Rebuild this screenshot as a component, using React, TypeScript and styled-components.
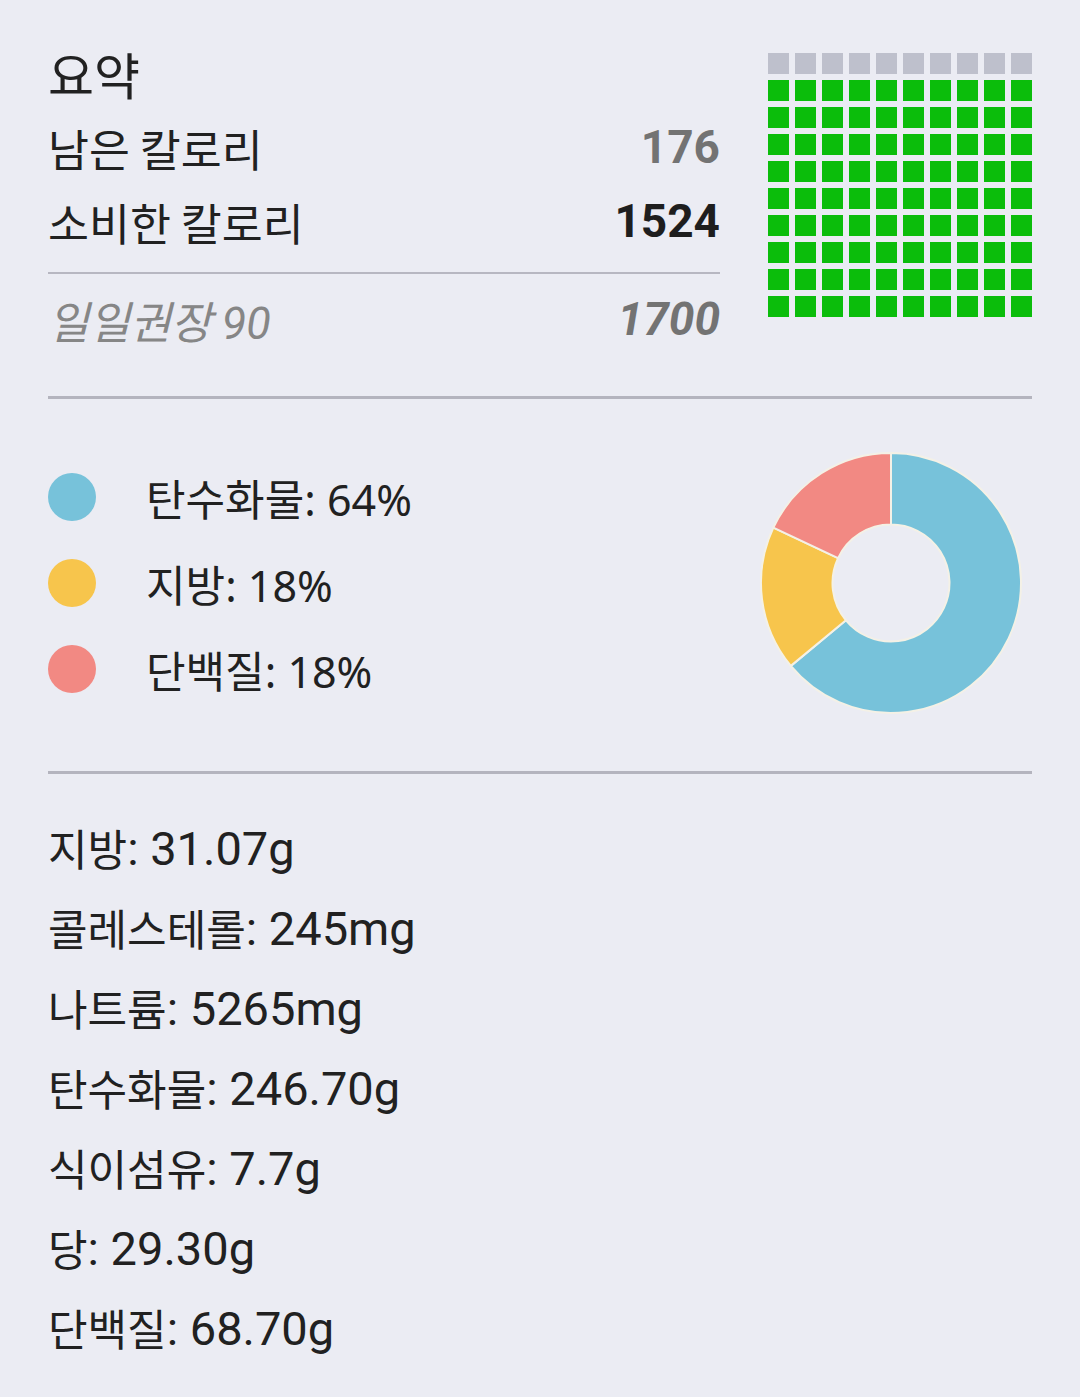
import React from "react";
import styled, { createGlobalStyle } from "styled-components";

const GlobalStyle = createGlobalStyle`
  html, body {
    margin: 0;
    padding: 0;
    background: #ebecf3;
  }
  body {
    font-family: Roboto, "Noto Sans CJK KR", sans-serif;
    color: #212121;
  }
`;

const Page = styled.div`
  padding: 0 48px;
  background: #ebecf3;
  min-height: 1397px;
  box-sizing: border-box;
`;

const TopSection = styled.section`
  display: flex;
  align-items: flex-start;
  justify-content: space-between;
  padding-top: 36px;
  padding-bottom: 40px;
`;

const SummaryCol = styled.div`
  width: 672px;
  display: flex;
  flex-direction: column;
`;

const Row = styled.div<{ $gap?: number }>`
  height: 74px;
  display: flex;
  align-items: center;
  justify-content: space-between;
  margin-top: ${(p) => p.$gap ?? 0}px;
`;

const Title = styled.h1`
  margin: 0;
  font-family: "Noto Sans CJK KR", sans-serif;
  font-weight: 400;
  font-size: 50px;
  color: #212121;
`;

const Label = styled.span<{ $muted?: boolean }>`
  font-family: "Noto Sans CJK KR", sans-serif;
  font-size: 44.5px;
  font-weight: 400;
  color: ${(p) => (p.$muted ? "#868686" : "#212121")};
  font-style: ${(p) => (p.$muted ? "italic" : "normal")};
  white-space: nowrap;
`;

const LatinInLabel = styled.span`
  font-family: Roboto, sans-serif;
  font-size: 45px;
  margin-left: 10px;
`;

const Value = styled.span<{ $tone: "gray" | "bold" | "italic" }>`
  font-family: Roboto, sans-serif;
  font-size: 46px;
  font-weight: 700;
  font-style: ${(p) => (p.$tone === "italic" ? "italic" : "normal")};
  color: ${(p) => (p.$tone === "bold" ? "#1e1e1e" : "#737373")};
`;

const ThinRule = styled.hr`
  margin: 14px 0 0;
  border: none;
  height: 2px;
  background: #b7b7c1;
`;

const Grid = styled.div`
  margin-top: 17px;
  display: grid;
  grid-template-columns: repeat(10, 21px);
  grid-auto-rows: 21px;
  gap: 6px;
`;

const Cell = styled.div<{ $filled: boolean }>`
  background: ${(p) => (p.$filled ? "#0bbd0b" : "#bec0cc")};
`;

const Divider = styled.hr`
  margin: 0;
  border: none;
  height: 3px;
  background: #b4b4be;
`;

const MacroSection = styled.section`
  display: flex;
  align-items: center;
  justify-content: space-between;
  padding: 52px 0 56px;
`;

const Legend = styled.ul`
  list-style: none;
  margin: 0;
  padding: 0;
  display: flex;
  flex-direction: column;
`;

const LegendItem = styled.li`
  height: 86px;
  display: flex;
  align-items: center;
  gap: 50px;
`;

const Dot = styled.span<{ $color: string }>`
  width: 48px;
  height: 48px;
  border-radius: 50%;
  background: ${(p) => p.$color};
  flex: none;
`;

const LegendText = styled.span`
  font-family: "Noto Sans", "Noto Sans CJK KR", sans-serif;
  font-size: 43px;
  color: #212121;
`;

const PieWrap = styled.div`
  margin-right: 9px;
  width: 264px;
  height: 264px;
`;

const NutrientList = styled.ul`
  list-style: none;
  margin: 0;
  padding: 34px 0 0;
`;

const Nutrient = styled.li`
  height: 80px;
  display: flex;
  align-items: center;
  font-family: Roboto, sans-serif;
  font-size: 47px;
  color: #212121;
  white-space: pre;
`;

const NutrientName = styled.span`
  font-family: "Noto Sans CJK KR", sans-serif;
  font-size: 43px;
  position: relative;
  top: -1px;
`;

const macros = [
  { name: "탄수화물", pct: 64, color: "#77c2da" },
  { name: "지방", pct: 18, color: "#f7c54c" },
  { name: "단백질", pct: 18, color: "#f28983" },
];

const nutrients = [
  { name: "지방", value: "31.07g" },
  { name: "콜레스테롤", value: "245mg" },
  { name: "나트륨", value: "5265mg" },
  { name: "탄수화물", value: "246.70g" },
  { name: "식이섬유", value: "7.7g" },
  { name: "당", value: "29.30g" },
  { name: "단백질", value: "68.70g" },
];

function Donut() {
  const cx = 132;
  const cy = 132;
  const R = 130;
  const r = 58.5;
  const pt = (f: number, rad: number) => {
    const a = f * Math.PI * 2 - Math.PI / 2;
    return [cx + rad * Math.cos(a), cy + rad * Math.sin(a)];
  };
  let acc = 0;
  return (
    <svg width="264" height="264" viewBox="0 0 264 264">
      {macros.map((m) => {
        const s = acc;
        const e = acc + m.pct / 100;
        acc = e;
        const [x1, y1] = pt(s, R);
        const [x2, y2] = pt(e, R);
        const [x3, y3] = pt(e, r);
        const [x4, y4] = pt(s, r);
        const large = e - s > 0.5 ? 1 : 0;
        const d = `M${x1} ${y1} A${R} ${R} 0 ${large} 1 ${x2} ${y2} L${x3} ${y3} A${r} ${r} 0 ${large} 0 ${x4} ${y4} Z`;
        return <path key={m.name} d={d} fill={m.color} stroke="#f4f1e6" strokeWidth="2" strokeLinejoin="round" />;
      })}
    </svg>
  );
}

export default function App() {
  const cells = Array.from({ length: 100 }, (_, i) => i >= 10);
  return (
    <Page>
      <GlobalStyle />
      <TopSection>
        <SummaryCol>
          <Row>
            <Title>요약</Title>
          </Row>
          <Row>
            <Label>남은 칼로리</Label>
            <Value $tone="gray">176</Value>
          </Row>
          <Row>
            <Label>소비한 칼로리</Label>
            <Value $tone="bold">1524</Value>
          </Row>
          <ThinRule />
          <Row $gap={8}>
            <Label $muted>
              일일권장<LatinInLabel>90</LatinInLabel>
            </Label>
            <Value $tone="italic">1700</Value>
          </Row>
        </SummaryCol>
        <Grid>
          {cells.map((f, i) => (
            <Cell key={i} $filled={f} />
          ))}
        </Grid>
      </TopSection>
      <Divider />
      <MacroSection>
        <Legend>
          {macros.map((m) => (
            <LegendItem key={m.name}>
              <Dot $color={m.color} />
              <LegendText>
                {m.name}: {m.pct}%
              </LegendText>
            </LegendItem>
          ))}
        </Legend>
        <PieWrap>
          <Donut />
        </PieWrap>
      </MacroSection>
      <Divider />
      <NutrientList>
        {nutrients.map((n) => (
          <Nutrient key={n.name}>
            <NutrientName>{n.name}</NutrientName>: {n.value}
          </Nutrient>
        ))}
      </NutrientList>
    </Page>
  );
}
